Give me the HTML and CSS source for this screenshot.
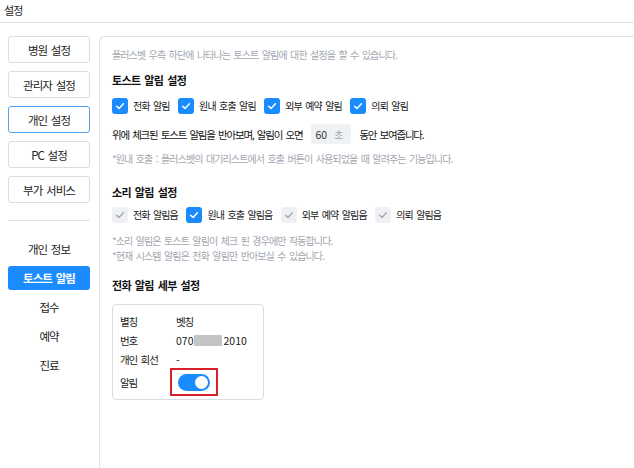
FILE: index.html
```html
<!DOCTYPE html>
<html lang="ko">
<head>
<meta charset="utf-8">
<link rel="stylesheet" href="styles.css">
</head>
<body>
<header class="topbar">설정</header>
<div class="layout">
  <nav class="sidebar">
    <div class="tabs">
      <button class="tab">병원 설정</button>
      <button class="tab">관리자 설정</button>
      <button class="tab active">개인 설정</button>
      <button class="tab">PC 설정</button>
      <button class="tab">부가 서비스</button>
    </div>
    <hr class="divider">
    <ul class="menu">
      <li>개인 정보</li>
      <li class="on">토스트 알림</li>
      <li>접수</li>
      <li>예약</li>
      <li>진료</li>
    </ul>
  </nav>
  <main class="panel">
    <p class="desc">플러스벳 우측 하단에 나타나는 토스트 알림에 대한 설정을 할 수 있습니다.</p>

    <h2 class="h h1">토스트 알림 설정</h2>
    <div class="checks">
      <label class="chk"><span class="box on"><svg viewBox="0 0 16 16"><polyline points="4.6,8.2 7,10.4 11.4,5.8"/></svg></span>전화 알림</label>
      <label class="chk"><span class="box on"><svg viewBox="0 0 16 16"><polyline points="4.6,8.2 7,10.4 11.4,5.8"/></svg></span>원내 호출 알림</label>
      <label class="chk"><span class="box on"><svg viewBox="0 0 16 16"><polyline points="4.6,8.2 7,10.4 11.4,5.8"/></svg></span>외부 예약 알림</label>
      <label class="chk"><span class="box on"><svg viewBox="0 0 16 16"><polyline points="4.6,8.2 7,10.4 11.4,5.8"/></svg></span>의뢰 알림</label>
    </div>
    <div class="timer">
      <span>위에 체크된 토스트 알림을 반아보며, 알림이 오면</span>
      <span class="sec"><span class="num">60</span><span class="unit">초</span></span>
      <span>동안 보여줍니다.</span>
    </div>
    <p class="note n1">*원내 호출 : 플러스벳의 대기리스트에서 호출 버튼이 사용되었을 때 알려주는 기능입니다.</p>

    <h2 class="h h2">소리 알림 설정</h2>
    <div class="checks sound">
      <label class="chk"><span class="box off"><svg viewBox="0 0 16 16"><polyline points="4.6,8.2 7,10.4 11.4,5.8"/></svg></span>전화 알림음</label>
      <label class="chk"><span class="box on"><svg viewBox="0 0 16 16"><polyline points="4.6,8.2 7,10.4 11.4,5.8"/></svg></span>원내 호출 알림음</label>
      <label class="chk"><span class="box off"><svg viewBox="0 0 16 16"><polyline points="4.6,8.2 7,10.4 11.4,5.8"/></svg></span>외부 예약 알림음</label>
      <label class="chk"><span class="box off"><svg viewBox="0 0 16 16"><polyline points="4.6,8.2 7,10.4 11.4,5.8"/></svg></span>의뢰 알림음</label>
    </div>
    <p class="note n2">*소리 알림은 토스트 알림이 체크 된 경우에만 작동합니다.</p>
    <p class="note n3">*현재 시스템 알림은 전화 알림만 반아보실 수 있습니다.</p>

    <h2 class="h h3">전화 알림 세부 설정</h2>
    <div class="card">
      <div class="row r1"><span class="k">별칭</span><span class="v">벳칭</span></div>
      <div class="row r2"><span class="k">번호</span><span class="v"><span class="dg">070</span><span class="mask"></span><span class="dg">2010</span></span></div>
      <div class="row r3"><span class="k">개인 회선</span><span class="v">-</span></div>
      <div class="row r4"><span class="k">알림</span><span class="v"><span class="hl"><span class="toggle"><span class="knob"></span></span></span></span></div>
    </div>
  </main>
</div>
</body>
</html>
```

FILE: styles.css
```css
* { box-sizing: border-box; }
html, body { margin: 0; padding: 0; background: #fff; }
body {
  font-family: "Noto Sans CJK KR", "Noto Sans", sans-serif;
  color: #222;
  width: 634px;
  height: 468px;
  overflow: hidden;
}
.topbar {
  height: 23px;
  line-height: 21px;
  padding-left: 4px;
  font-size: 11px;
  letter-spacing: -0.09em;
  color: #222;
  border-bottom: 1px solid #e0e0e6;
}
.layout {
  display: flex;
  padding-top: 13px;
  padding-left: 8px;
  gap: 9px;
}
.sidebar { width: 82px; flex: none; letter-spacing: -0.06em; word-spacing: 1.5px; }
.tabs { display: flex; flex-direction: column; gap: 8px; }
.tab {
  height: 27px;
  width: 82px;
  background: #fff;
  border: 1px solid #dcdde3;
  border-radius: 3px;
  font-family: inherit;
  letter-spacing: inherit;
  word-spacing: inherit;
  font-size: 11.5px;
  color: #222;
  padding: 0;
}
.tab.active { border-color: #4da3f0; }
.divider {
  border: 0;
  border-top: 1px solid #e0e0e6;
  margin: 17px 0 0;
}
.menu {
  list-style: none;
  margin: 16px 0 0;
  padding: 0;
  display: flex;
  flex-direction: column;
  gap: 5px;
}
.menu li {
  height: 24px;
  line-height: 24px;
  text-align: center;
  font-size: 11.5px;
  color: #222;
  border-radius: 3px;
}
.menu li.on { background: #1a8cff; color: #fff; font-weight: 700; }
.panel {
  flex: 1;
  height: 440px;
  border: 1px solid #e0e0e6;
  border-right: 0;
  border-bottom: 0;
  border-top-left-radius: 6px;
  padding: 10px 0 0 12px;
  font-size: 10px;
  color: #222;
  letter-spacing: -0.9px;
  word-spacing: 1.5px;
}
p { margin: 0; }
.desc { line-height: 16px; color: #a3a7b0; font-size: 10px; }
.h { margin: 0; font-size: 11px; font-weight: 700; line-height: 18px; color: #111; letter-spacing: -0.65px; }
.h1 { margin-top: 8px; }
.checks { display: flex; align-items: center; height: 16px; margin-top: 9px; }
.chk { display: flex; align-items: center; gap: 5px; margin-right: 8.5px; font-size: 10px; line-height: 16px; color: #1a1a1a; }
.box { width: 16px; height: 16px; border-radius: 3px; display: inline-flex; flex: none; }
.box svg { width: 16px; height: 16px; fill: none; stroke-width: 1.5; stroke-linecap: round; stroke-linejoin: round; }
.box.on { background: #1a8cff; }
.box.on svg { stroke: #fff; }
.box.off { background: #eef0f4; }
.box.off svg { stroke: #a8acb4; }
.sound { margin-top: 6px; }
.timer { display: flex; align-items: center; height: 20px; margin-top: 10px; font-size: 10.5px; letter-spacing: -1.2px; color: #111; }
.sec {
  display: inline-flex; align-items: center; justify-content: space-between;
  width: 40px; height: 20px; margin: 0 8px 0 9px; padding: 0 8px 0 4px;
  background: #f0f1f5; border-radius: 3px; letter-spacing: 0;
}
.sec .num { color: #333; font-size: 10.5px; }
.sec .unit { color: #a0a4ad; font-size: 10px; }
.note { color: #a3a7b0; font-size: 10px; line-height: 15px; }
.n1 { margin-top: 7px; line-height: 16px; }
.h2 { margin-top: 16px; }
.n2 { margin-top: 10px; }
.h3 { margin-top: 13px; }
.card {
  margin-top: 10px;
  width: 152px;
  height: 96px;
  border: 1px solid #dcdde3;
  border-radius: 4px;
  padding: 7px 0 0 7px;
}
.row { display: flex; align-items: center; font-size: 10.5px; color: #1a1a1a; letter-spacing: -0.1em; }
.r1, .r2 { height: 19px; }
.r3 { height: 18px; }
.r4 { height: 28px; }
.k { width: 56px; }
.v { display: inline-flex; align-items: center; }
.dg { letter-spacing: 0; }
.mask { display: inline-block; width: 28px; height: 11px; background: #c4c4c6; margin: 0 1px; }
.hl {
  display: inline-flex; align-items: center; justify-content: center;
  width: 48px; height: 28px; margin-left: -6px;
  border: 2px solid #d8202a;
}
.toggle {
  width: 32px; height: 17px; border-radius: 9px; background: #1a8cff;
  display: inline-flex; align-items: center; justify-content: flex-end; padding-right: 2px;
}
.knob { width: 13px; height: 13px; border-radius: 50%; background: #fff; }
```
